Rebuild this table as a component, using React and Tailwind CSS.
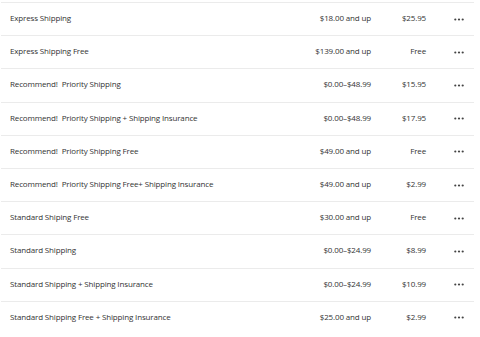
const rates = [
	{ name: "Express Shipping", range: "$18.00 and up", price: "$25.95" },
	{ name: "Express Shipping Free", range: "$139.00 and up", price: "Free" },
	{ name: "Recommend!  Priority Shipping", range: "$0.00–$48.99", price: "$15.95" },
	{ name: "Recommend!  Priority Shipping + Shipping Insurance", range: "$0.00–$48.99", price: "$17.95" },
	{ name: "Recommend!  Priority Shipping Free", range: "$49.00 and up", price: "Free" },
	{ name: "Recommend!  Priority Shipping Free+ Shipping Insurance", range: "$49.00 and up", price: "$2.99" },
	{ name: "Standard Shiping Free", range: "$30.00 and up", price: "Free" },
	{ name: "Standard Shipping", range: "$0.00–$24.99", price: "$8.99" },
	{ name: "Standard Shipping + Shipping Insurance", range: "$0.00–$24.99", price: "$10.99" },
	{ name: "Standard Shipping Free + Shipping Insurance", range: "$25.00 and up", price: "$2.99" },
];

function Dots() {
	return (
		<svg width="10" height="3" viewBox="0 0 10 3" className="block">
			<circle cx="1.3" cy="1.5" r="1.1" fill="#444" />
			<circle cx="5" cy="1.5" r="1.1" fill="#444" />
			<circle cx="8.7" cy="1.5" r="1.1" fill="#444" />
		</svg>
	);
}

export default function App() {
	return (
		<div className="w-[480px] h-[337px] overflow-hidden bg-white pt-[2px] font-['Open_Sans',sans-serif] text-[8px] tracking-[-0.15px] text-[#333]">
			<div className="w-[473px] ml-[1px]">
				{rates.map((r, i) => (
					<div key={i} className="flex items-center h-[33.2px] border-t border-[#ebebeb] pl-[9px] pb-[2px]">
						<div className="flex-1 whitespace-pre">{r.name}</div>
						<div className="w-[120px] text-right">{r.range}</div>
						<div className="w-[55px] text-right">{r.price}</div>
						<div className="w-[48px] flex justify-center pl-[18px] pt-[2px]">
							<Dots />
						</div>
					</div>
				))}
			</div>
		</div>
	);
}
